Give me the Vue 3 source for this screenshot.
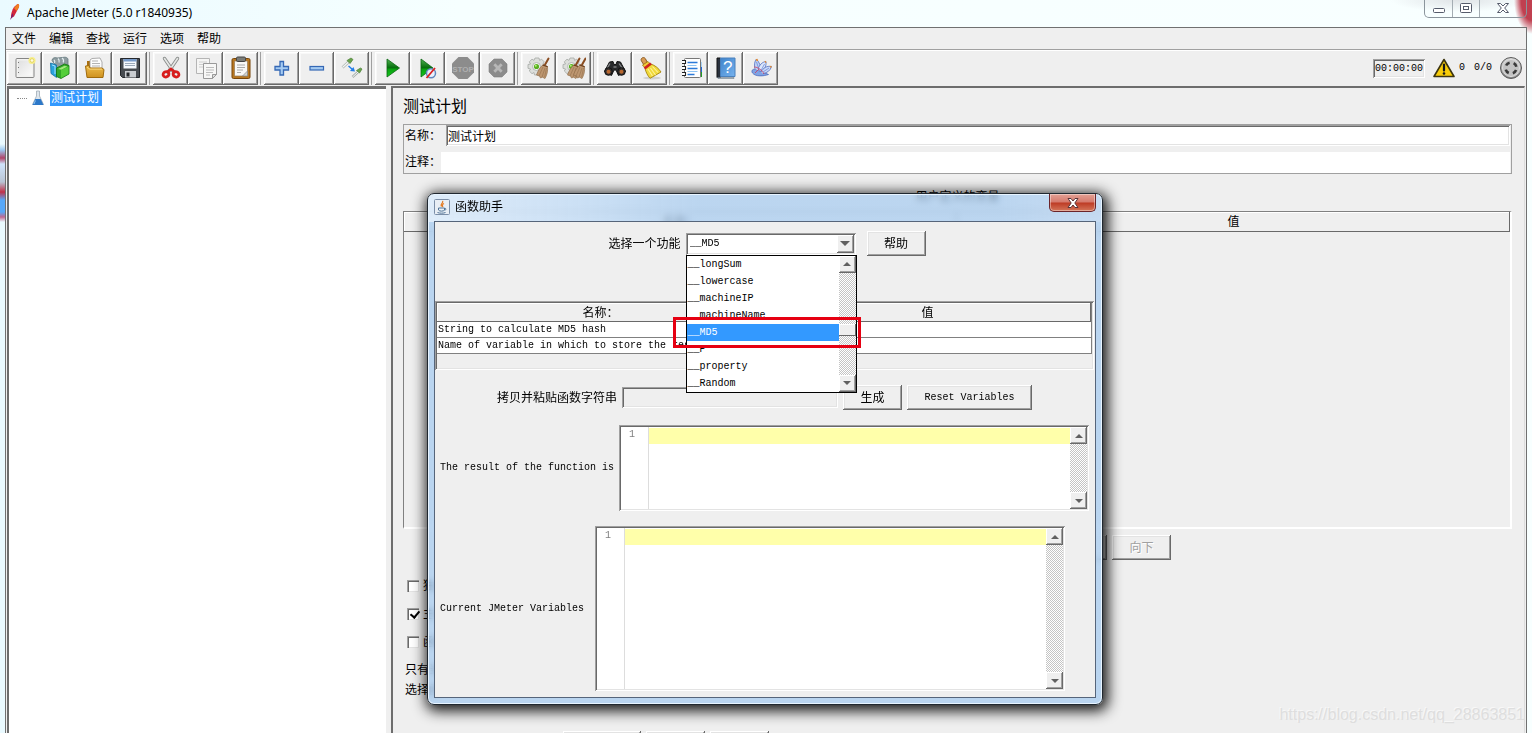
<script setup>
import { ref } from 'vue'

const menus = ['文件', '编辑', '查找', '运行', '选项', '帮助']

const gear =
  '<path d="M8 2h4l.6 2.4 2-1.200 2.600 2.600-1.200 2L18 8.500v4l-2.500.6.9 2.200-2.700 2.600-2-1.200L11 19H7.500L7 16.500l-2 1.200L2.300 15l1.200-2L1 12.300V8.500L3.500 8 2.300 5.800 5 3.200l2 1.200z" fill="#dcdedb" stroke="#a4a8a4" stroke-width=".8"/><circle cx="9.500" cy="10.500" r="4" fill="#f2f4f0" stroke="#b4b8b4"/><circle cx="9.500" cy="10.500" r="2.600" fill="#58b020"/><circle cx="8.800" cy="9.800" r="1" fill="#b6ee7a"/>'
const broom = (x) =>
  `<g transform="translate(${x} 0)"><path d="M20.500 2.500l-4.500 8" stroke="#8a4c20" stroke-width="2" stroke-linecap="round"/><path d="M15.500 8.500c-3 2-5.500 6-7 10.500l3 1 1 2 2-.8 2.500 1.300c2-3.500 3-7.500 2.500-12z" fill="#bd9670" stroke="#94714e" stroke-width=".7"/><path d="M15 11l-4 9M17 12l-3 9M18.500 12l-1.800 9" stroke="#9a7652" stroke-width=".7"/><path d="M14.600 9l5 1.800" stroke="#6b3c1c" stroke-width="1.200"/></g>`

const art = {
  new: '<rect x="3" y="2.500" width="18" height="19" rx="1" fill="#f2f2f1" stroke="#858585"/><path d="M5 4.500h14v15H5z" fill="url(#gPage)"/><path d="M5.500 6v1M5.500 11v1M5.500 16v1" stroke="#777"/><circle cx="19" cy="4.500" r="3.600" fill="#f7ee8c"/><circle cx="19" cy="4.500" r="1.800" fill="#fffbe0" stroke="#d9c94e" stroke-width=".7"/>',
  templates:
    '<path d="M4 4.500C4 2 7 1 9 2l8-.8c2 0 3.500 1.500 3 3V14l-8 2z" fill="#8e9ca0" stroke="#65787f" stroke-width=".8"/><path d="M6 4c1 1 1 2 .5 3M10 2.500c1.500 1.500 1.500 3 1 4M14 2c1.500 1 1.800 3 1.200 4.500" stroke="#e3edf0" fill="none" stroke-width="1.200"/><path d="M2.500 7l6 2v12.500L3 17.500z" fill="#2aa3dc" stroke="#126ea2" stroke-width=".8"/><path d="M4 9l3 1v8" stroke="#a4e1fa" fill="none"/><path d="M8.500 12l8-4 4.500 1.500V18l-8 4.500-4.500-2z" fill="#32a928" stroke="#12750c" stroke-width=".8"/><path d="M10 13l6.500-3.200 3 .8-6 3.200z" fill="#a3e87c"/><path d="M13 14v8l7.500-4.200V10.500z" fill="#54ce3a"/>',
  open: '<path d="M4 9V5h4l2 2v8H4z" fill="#a86f12"/><path d="M7 13V4l2-1.500 8-.5 2 4v9z" fill="#fcfcfc" stroke="#999" stroke-width=".8"/><path d="M9 5h6M9 7.500h8M9 10h8" stroke="#aaa" stroke-width=".9"/><path d="M2.500 10l3.500-.5 1 2.500h12l2 1.500-1 8H4z" fill="url(#gFolder)" stroke="#a06b0d"/><path d="M4 11.500l1 .2 1.300 1.400H19" stroke="#f7d680" fill="none"/>',
  save: '<path d="M2.500 2.500h19v19h-17l-2-2z" fill="#474b50" stroke="#24272b"/><path d="M5.500 3h13v9.500h-13z" fill="#f4f8fd"/><path d="M5.500 3h13v2.500h-13z" fill="#789bc9"/><path d="M7 7.500h10M7 9.500h10" stroke="#9ba9b9"/><path d="M7 15h11v6.500H7z" fill="#c9ccd0"/><path d="M8.500 16.500h3v4h-3z" fill="#25282c"/>',
  cut: '<path d="M5.500 2.500L15 16.500M18.500 2.500L9 16.500" stroke="#8a8d8c" stroke-width="3.400" stroke-linecap="round"/><path d="M5.500 2.500L15 16.500M18.500 2.500L9 16.500" stroke="#e6e8e6" stroke-width="1.600" stroke-linecap="round"/><ellipse cx="7" cy="18.300" rx="3" ry="2.600" fill="none" stroke="#d81c1c" stroke-width="2.800" transform="rotate(-28 7 18.300)"/><ellipse cx="17" cy="18.300" rx="3" ry="2.600" fill="none" stroke="#d81c1c" stroke-width="2.800" transform="rotate(28 17 18.300)"/><path d="M9 15.500l3-2.500 3 2.500" stroke="#d81c1c" stroke-width="2.600" fill="none"/>',
  copy: '<path d="M2.500 2.500h13v15h-13z" fill="#f5f5f4" stroke="#b5b5b5"/><path d="M5 6h8M5 8.500h8M5 11h4" stroke="#cecece"/><path d="M9.500 7.500h13v11l-4 4h-9z" fill="#f7f7f6" stroke="#999"/><path d="M12 11.500h8M12 14h8M12 16.500h7M12 19h4" stroke="#bcbcbc"/><path d="M22.500 18.500h-4v4z" fill="#ddd" stroke="#999"/>',
  paste:
    '<rect x="3" y="2.500" width="18" height="20" rx="1.500" fill="#b87720" stroke="#78460a"/><path d="M5.500 5h13v15h-13z" fill="#f8f8f7" stroke="#967a54" stroke-width=".7"/><rect x="7.500" y="1" width="9" height="4.500" rx="1.200" fill="#7a7c78" stroke="#444"/><path d="M8 9h8M8 11.500h8M8 14h6M8 16.500h4" stroke="#aaa"/><path d="M13.500 20l5-5v5z" fill="#d3d4d0" stroke="#888" stroke-width=".7"/>',
  plus: '<path d="M10 5.500h3.500v5h5V14h-5v5H10v-5H5v-3.500h5z" fill="#a5cbf2" stroke="#3568b5" stroke-width="1.300"/>',
  minus: '<rect x="5" y="10.500" width="13.500" height="3.500" fill="#a5cbf2" stroke="#3568b5" stroke-width="1.200"/>',
  toggle:
    '<path d="M2.500 11.500L8.500 6" stroke="#a7afac" stroke-width="2.600"/><path d="M2.500 11.500L8.500 6" stroke="#f4f8f6" stroke-width="1.300"/><path d="M7 4.500l3 3 3-4-2-1.500z" fill="#69a24c" stroke="#4c8036" stroke-width=".7"/><path d="M12.500 21l5.500-5" stroke="#a7afac" stroke-width="2.400"/><path d="M12.500 21l5.500-5" stroke="#f4f8f6"/><path d="M16.500 14.500l3 2.500 2.500-4-1.500-1z" fill="#69a24c" stroke="#4c8036" stroke-width=".7"/><path d="M8.500 10l4 3.500" stroke="#237de8" stroke-width="1.400"/><path d="M15 15.500l-5-.5 3.500-4z" fill="#237de8"/>',
  start: '<path d="M6 3l12.500 9L6 21z" fill="url(#gPlay)" stroke="#0b6412" stroke-width=".8"/>',
  startNp:
    '<path d="M5 3l12 9-12 9z" fill="url(#gPlay)" stroke="#0b6412" stroke-width=".8"/><circle cx="15" cy="17.300" r="4.500" fill="#e9f1fc" stroke="#5f86be" stroke-width="1.500"/><path d="M10.500 22l8.500-10" stroke="#db2121" stroke-width="1.800"/>',
  stop: '<path d="M7.500 1h9L23 7.500v9L16.500 23h-9L1 16.500v-9z" fill="#8c8c8c"/><text x="12" y="15.500" text-anchor="middle" font-size="8" font-weight="bold" font-family="Liberation Sans, sans-serif" fill="#b0b0b0">STOP</text>',
  shutdown:
    '<path d="M8 3h8l5 5v8l-5 5H8l-5-5V8z" fill="#8c8c8c" stroke="#7d7d7d" stroke-width=".6"/><path d="M8.300 8.300l7.400 7.400M15.700 8.300l-7.400 7.400" stroke="#b7b7b7" stroke-width="2.800"/>',
  clear: gear + broom(1),
  clearAll: gear + broom(-3) + broom(3),
  search:
    '<path d="M6.500 6l3.500-.5 1 3h2l1-3 3.500.5 5 9.500-7 4L13 14h-2l-2.500 5.500-7-4z" fill="#292a2c" stroke="#151515"/><path d="M7 7.500l-3.500 6M16 7.500l3.500 5" stroke="#858789" stroke-width="1.300"/><circle cx="5.500" cy="15.500" r="3.800" fill="#36302e" stroke="#111"/><circle cx="18.500" cy="15.500" r="3.800" fill="#36302e" stroke="#111"/><circle cx="5.500" cy="15.800" r="2" fill="#b9682f"/><circle cx="18.500" cy="15.800" r="2" fill="#b9682f"/><path d="M10.500 11h3" stroke="#aaa"/>',
  resetSearch:
    '<ellipse cx="14" cy="22" rx="9" ry="1.500" fill="#d2d2d0"/><path d="M3.500 2.500c1.200-1.400 3-1.200 4 .3l2 4-3.500 2.300-2.500-4c-.5-1-.6-1.700 0-2.600z" fill="#d99b52" stroke="#80501a" stroke-width=".9"/><path d="M4.500 9L10 5.500l2.500 2.700-5.300 4z" fill="#f1c93a" stroke="#967309" stroke-width=".8"/><path d="M7 12.500l6-4.500c4 1.500 7.500 4 10 8-4 2.500-7 4-11 6.300-2.500-2.800-4-6-5-9.800z" fill="#f0d938" stroke="#a68510" stroke-width=".9"/><path d="M10 13l4.500 7M12.500 12l5 7M14.500 10.500l5.500 6" stroke="#fff19b" stroke-width="1.100"/><path d="M6.500 12.500l6.500-5" stroke="#cf2020" stroke-width="2.800"/>',
  function:
    '<path d="M20 11h3v5h-3z" fill="#2367d8"/><path d="M20 16h3v5h-3z" fill="#229c24"/><path d="M20 6h3v5h-3z" fill="#a9d4f5"/><rect x="5.500" y="2.500" width="16" height="19" rx="1" fill="#fff" stroke="#777"/><path d="M8.500 6.500h10M8.500 12.500h10M8.500 18.500h7" stroke="#2d7ad8" stroke-width="1.500"/><path d="M8.500 9.500h9M8.500 15.500h10" stroke="#8ec4f4"/><path d="M3 4.500h3.500v3H3M3 10.500h3.500v3H3M3 16.500h3.500v3H3" fill="#fff" stroke="#222" stroke-width="1.100"/>',
  help: '<path d="M3 2h3.500v19.500H3z" fill="#28303c" stroke="#111"/><path d="M6.500 2h14.500v18.500H6.500z" fill="url(#gBook)" stroke="#4a80bc"/><path d="M3 21.500h17v1H4z" fill="#ccd4dc" stroke="#567" stroke-width=".5"/><text x="13.800" y="17" text-anchor="middle" font-size="17" font-family="Liberation Sans, sans-serif" fill="#fff">?</text>',
  jmeter:
    '<path d="M3.500 17c-1.500-2 0-4.500 3-3.500 4 1.500 8 2.500 13 5-4.500 1.700-13 2.500-16-1.500z" fill="#7fa2e4" stroke="#3d5fb6" stroke-width=".7"/><path d="M6 13C5 9 5.500 5 7.500 3c3 3.500 4.500 8 5.500 12" fill="#c0d3f7" stroke="#526fc0" stroke-width=".8"/><path d="M9 13c1.500-4 4-7 8-7.500.5 4-1 7-3 10" fill="#dbe6fb" stroke="#526fc0" stroke-width=".8"/><path d="M12 16c2-4 6-6.500 10.500-5.500-1 4-4.500 6.500-8.500 7" fill="#c8d8f8" stroke="#526fc0" stroke-width=".8"/><path d="M7.500 6l3 9M15.500 8l-4 7.500M20 12l-6 4" stroke="#6d89d6" stroke-width=".8"/><path d="M5 11c4 0 8 3 10 7M10 13l-4 4" stroke="#cc4060" stroke-width=".8" fill="none"/><path d="M7.500 3l.9 2M16 6.300l1-.8M21 11l1.500-.5" stroke="#e58a30" stroke-width="1.800"/>'
}

const toolGroups = [
  [['new', '新建'], ['templates', '模板'], ['open', '打开'], ['save', '保存']],
  [['cut', '剪切'], ['copy', '复制'], ['paste', '粘贴']],
  [['plus', '展开'], ['minus', '折叠'], ['toggle', '切换']],
  [['start', '启动'], ['startNp', '不停顿启动'], ['stop', '停止'], ['shutdown', '关闭']],
  [['clear', '清除'], ['clearAll', '清除全部']],
  [['search', '搜索'], ['resetSearch', '重置搜索']],
  [['function', '函数助手'], ['help', '帮助'], ['jmeter', '关于']]
]

const planName = ref('测试计划')
const planComment = ref('')
const options = [
  { label: '独立运行', on: ref(false) },
  { label: '主线程结束', on: ref(true) },
  { label: '函数测试', on: ref(false) }
]

const fns = ['__longSum', '__lowercase', '__machineIP', '__machineName', '__MD5', '__P', '__property', '__Random']
const picked = ref('__MD5')
const params = ['String to calculate MD5 hash', 'Name of variable in which to store the result (optional)']
const generated = ref('')
const result = ref('')
const variables = ref('')
</script>

<template>
  <div class="window">
    <svg class="defs" width="0" height="0" aria-hidden="true">
      <defs>
        <linearGradient id="gPage" x1="0" y1="0" x2="1" y2="1"><stop offset="0" stop-color="#e0e0e0" /><stop offset="1" stop-color="#fafafa" /></linearGradient>
        <linearGradient id="gFolder" x1="0" y1="0" x2="0" y2="1"><stop offset="0" stop-color="#eebd4c" /><stop offset="1" stop-color="#cf9220" /></linearGradient>
        <linearGradient id="gPlay" x1="0" y1="0" x2="0" y2="1"><stop offset="0" stop-color="#4fb352" /><stop offset=".5" stop-color="#046c0a" /><stop offset=".55" stop-color="#0aa010" /><stop offset="1" stop-color="#14c81c" /></linearGradient>
        <linearGradient id="gBook" x1="0" y1="0" x2="1" y2="1"><stop offset="0" stop-color="#3f84cc" /><stop offset="1" stop-color="#76b2ee" /></linearGradient>
        <linearGradient id="gSteel" x1="0" y1="0" x2="0" y2="1"><stop offset="0" stop-color="#d8d8d8" /><stop offset="1" stop-color="#868686" /></linearGradient>
      </defs>
    </svg>

    <header class="titlebar">
      <svg class="feather" viewBox="0 0 12 18" aria-hidden="true">
        <path d="M9.500 1c2 0 2 2 1 4L6 13.500 3 15c-.5-3 1-8 3-11z" fill="#d3283c" />
        <path d="M9.500 1c2 0 2 2 1 4L8.500 8 6 5z" fill="#f08020" />
        <path d="M4.500 10L2 17l3.500-4z" fill="#7c1f6c" />
      </svg>
      <h1>Apache JMeter (5.0 r1840935)</h1>
      <div class="winctl">
        <button type="button" aria-label="最小化"><svg width="14" height="14" viewBox="0 0 14 14"><rect x="1.500" y="7.500" width="11" height="4" rx="1" fill="#fff" stroke="#555b6b" /></svg></button>
        <button type="button" aria-label="最大化"><svg width="14" height="14" viewBox="0 0 14 14"><rect x="1.500" y="2.500" width="11" height="9" rx="1" fill="#fff" stroke="#555b6b" /><rect x="4.500" y="5.500" width="5" height="3" fill="#fff" stroke="#555b6b" /></svg></button>
        <button type="button" class="wide" aria-label="关闭"><svg width="14" height="14" viewBox="0 0 14 14"><path d="M1.500 2.500h3L7 5l2.500-2.500h3L8.700 7l3.800 4.500h-3L7 9l-2.500 2.500h-3L5.300 7z" fill="#fff" stroke="#555b6b" /></svg></button>
      </div>
    </header>

    <div class="client">
      <nav class="menubar">
        <button v-for="m in menus" :key="m" type="button">{{ m }}</button>
      </nav>

      <div class="toolbar">
        <div v-for="(g, i) in toolGroups" :key="i" class="group">
          <button v-for="[id, name] in g" :key="id" type="button" class="tool" :aria-label="name">
            <svg width="24" height="24" viewBox="0 0 24 24" fill="none" v-html="art[id]"></svg>
          </button>
        </div>
        <div class="status">
          <input class="clock sunken" type="text" value="00:00:00" readonly aria-label="耗时" />
          <svg class="warn" width="22" height="20" viewBox="0 0 22 20" aria-hidden="true">
            <path d="M11 1.500L21 18.500H1z" fill="#f8cc08" stroke="#3d3510" stroke-width="1.600" stroke-linejoin="round" />
            <path d="M11 6.500v6" stroke="#1a1a1a" stroke-width="2.200" stroke-linecap="round" /><circle cx="11" cy="15.500" r="1.300" fill="#1a1a1a" />
          </svg>
          <span class="errors">0</span>
          <span class="threads">0/0</span>
          <svg width="24" height="24" viewBox="0 0 24 24" aria-hidden="true">
            <circle cx="12" cy="12" r="10.500" fill="url(#gSteel)" stroke="#5a5a5a" />
            <circle cx="12" cy="12" r="8.500" fill="#c2c2c2" stroke="#dedede" />
            <circle cx="12" cy="12" r="5.500" fill="none" stroke="#3a3a3a" stroke-width="2.600" stroke-dasharray="4.400 4.240" stroke-dashoffset="-2.120" />
          </svg>
        </div>
      </div>

      <div class="split">
        <aside class="tree">
          <div class="node">
            <span class="twig"></span>
            <svg width="12" height="16" viewBox="0 0 12 16" aria-hidden="true">
              <path d="M4.500 1h3v5l4 8.500H.5l4-8.500z" fill="#dfe6ec" stroke="#9fabb5" stroke-width=".8" />
              <path d="M3.300 9h5.400l2.800 6H.5z" fill="#2d78c8" /><path d="M3.500 10.500l-1.500 3.500" stroke="#8fc3f2" />
            </svg>
            <span class="picked">测试计划</span>
          </div>
        </aside>

        <main class="plan">
          <h2>测试计划</h2>
          <div class="form">
            <div class="field"><label for="pname">名称：</label><input id="pname" v-model="planName" class="sunken" type="text" /></div>
            <div class="field note"><label for="pnote">注释：</label><input id="pnote" v-model="planComment" type="text" /></div>
          </div>
          <p class="vartitle">用户定义的变量</p>
          <div class="vars">
            <table><thead><tr><th>名称：</th><th>值</th></tr></thead></table>
          </div>
          <div class="actions">
            <button type="button" class="btn">添加</button>
            <button type="button" class="btn" disabled>删除</button>
            <button type="button" class="btn" disabled>向上</button>
            <button type="button" class="btn" disabled>向下</button>
          </div>
          <label v-for="o in options" :key="o.label" class="check"><input v-model="o.on.value" type="checkbox" />{{ o.label }}</label>
          <p class="hint">只有当</p>
          <p class="hint">选择函</p>
          <div class="paths">
            <button type="button" class="btn browse">浏览...</button>
            <button type="button" class="btn">删除</button>
            <button type="button" class="btn">清除</button>
          </div>
        </main>
      </div>
    </div>

    <section class="dialog" role="dialog" aria-labelledby="dlgtitle">
      <header class="dlghead">
        <svg width="16" height="16" viewBox="0 0 16 16" aria-hidden="true">
          <rect x=".5" y=".5" width="15" height="15" rx="1" fill="#e8eef5" stroke="#7b8ea8" />
          <path d="M8.500 2c1.500 2-3 3-1 5.500M10 4.500C8 5.500 8 6 8.800 8" stroke="#e37a22" stroke-width="1.300" fill="none" />
          <path d="M4.500 9h6v2c-1 1.500-5 1.500-6 0zM10.500 9.500c2-.5 2 1.500 0 1.700M3.500 13.500c2 .9 6 .9 8 0" stroke="#4f7397" fill="none" />
        </svg>
        <h2 id="dlgtitle">函数助手</h2>
        <button type="button" class="dlgclose" aria-label="关闭">
          <svg width="14" height="12" viewBox="0 0 14 12"><path d="M2 1.500h3L7 4l2-2.500h3L8.800 6l3.200 4.500H9L7 8l-2 2.500H2L5.200 6z" fill="#fff" stroke="#5a3438" /></svg>
        </button>
      </header>

      <div class="dlgbody">
        <div class="row pick">
          <label for="fn">选择一个功能</label>
          <div class="combo sunken">
            <select id="fn" v-model="picked"><option v-for="f in fns" :key="f">{{ f }}</option></select>
            <span class="knob down"></span>
            <div class="popup">
              <ul role="listbox" aria-label="函数">
                <li v-for="f in fns" :key="f" role="option" :aria-selected="f === picked" :class="{ on: f === picked }" @click="picked = f">{{ f }}</li>
              </ul>
              <div class="bar"><span class="knob up"></span><span class="thumb"></span><span class="knob down"></span></div>
              <div class="mark"></div>
            </div>
          </div>
          <button type="button" class="btn">帮助</button>
        </div>

        <div class="params sunken">
          <table>
            <thead><tr><th>名称：</th><th>值</th></tr></thead>
            <tbody><tr v-for="p in params" :key="p"><td>{{ p }}</td><td></td></tr></tbody>
          </table>
        </div>

        <div class="row gen">
          <label for="gen">拷贝并粘贴函数字符串</label>
          <input id="gen" v-model="generated" class="sunken" type="text" readonly />
          <button type="button" class="btn">生成</button>
          <button type="button" class="btn reset">Reset Variables</button>
        </div>

        <div class="row out">
          <label for="res">The result of the function is</label>
          <div class="editor sunken">
            <span class="gutter">1</span>
            <textarea id="res" v-model="result"></textarea>
            <div class="bar"><span class="knob up"></span><span class="knob down"></span></div>
          </div>
        </div>

        <div class="row out current">
          <label for="cur">Current JMeter Variables</label>
          <div class="editor sunken tall">
            <span class="gutter">1</span>
            <textarea id="cur" v-model="variables"></textarea>
            <div class="bar"><span class="knob up"></span><span class="knob down"></span></div>
          </div>
        </div>
      </div>
    </section>

    <div class="watermark">https://blog.csdn.net/qq_28863851</div>
  </div>
</template>

<style>
body {
  margin: 0;
  overflow: hidden;
}
</style>

<style scoped>
* {
  box-sizing: border-box;
}
.window {
  position: relative;
  display: flex;
  flex-direction: column;
  height: 100vh;
  padding: 0 5px;
  overflow: hidden;
  font: 12px/16px 'Liberation Sans', 'Noto Sans CJK SC', sans-serif;
  color: #000;
  background:
    linear-gradient(to bottom, transparent 144px, #9cc8f0 150px, #b04468 158px, #cfe4fb 164px, #b9c4d4 182px, #c03048 192px, #58a8f8 200px, #58a8f8 212px, #c06890 217px, transparent 222px) 0 0 / 5px 100% no-repeat,
    radial-gradient(ellipse 18px 34px at 100% 0, #c04050 0 60%, transparent) no-repeat,
    radial-gradient(ellipse 70px 12px at 1460px 0, #dfe3e6, transparent) no-repeat,
    linear-gradient(to right, #eafaff, #f6ffff 30%, #f8ffff);
}
.defs {
  position: absolute;
}
h1,
h2,
p,
ul {
  margin: 0;
  padding: 0;
  font-weight: normal;
}
button,
input,
select,
textarea {
  margin: 0;
  padding: 0;
  border: 0;
  border-radius: 0;
  font: inherit;
  color: inherit;
  background: none;
  outline: 0;
  appearance: none;
}
svg {
  display: block;
  flex: none;
}
.sunken {
  box-shadow: inset 1px 1px #a0a0a0, inset -1px -1px #fff, inset 2px 2px #696969, inset -2px -2px #e3e3e3;
}
.btn {
  height: 25px;
  min-width: 59px;
  padding: 0 16px;
  background: #efefef;
  box-shadow: inset -1px -1px #696969, inset 1px 1px #fff, inset -2px -2px #a0a0a0, inset 2px 2px #e3e3e3;
}
.btn:disabled {
  color: #a0a0a0;
  text-shadow: 1px 1px #fff;
}

.titlebar {
  display: flex;
  flex: none;
  height: 27px;
}
.feather {
  width: 12px;
  height: 18px;
  margin: 3px 7px 0 3px;
}
.titlebar h1 {
  font: 12px/25px 'Noto Sans', 'Open Sans', sans-serif;
}
.winctl {
  display: flex;
  height: 18px;
  margin-left: auto;
  border: 1px solid #8b959c;
  border-top: 0;
  border-radius: 0 0 5px 5px;
}
.winctl button {
  display: flex;
  justify-content: center;
  width: 27px;
  padding-top: 1px;
}
.winctl button + button {
  border-left: 1px solid #a4adb3;
}
.winctl .wide {
  width: 47px;
}

.client {
  display: flex;
  flex: 1;
  flex-direction: column;
  min-height: 0;
  background: #efefef;
  border: 1px solid #707070;
  border-bottom: 0;
}
.menubar {
  display: flex;
  flex: none;
  gap: 13px;
  height: 22px;
  padding-left: 6px;
  border-bottom: 1px solid #a0a0a0;
}
.toolbar {
  display: flex;
  flex: none;
  align-items: center;
  height: 36px;
  padding: 1px 3px 2px 1px;
  border-top: 1px solid #fff;
}
.group {
  display: flex;
}
.group + .group {
  margin-left: 2px;
  padding-left: 3px;
  border-left: 1px solid #a0a0a0;
}
.tool {
  display: flex;
  align-items: center;
  justify-content: center;
  width: 35px;
  height: 33px;
  box-shadow: inset -1px -1px #696969, inset 1px 1px #fff, inset -2px -2px #a0a0a0, inset 2px 2px #f8f8f8;
}
.status {
  display: flex;
  align-items: center;
  margin-left: auto;
  font: 10px/16px 'Liberation Mono', monospace;
}
.clock {
  width: 52px;
  height: 19px;
  padding-left: 2px;
}
.warn {
  margin-left: 8px;
}
.errors {
  margin-left: 4px;
}
.threads {
  margin: 0 7px 0 9px;
}

.split {
  display: flex;
  flex: 1;
  min-height: 0;
  padding: 0 1px;
}
.tree {
  flex: none;
  width: 379px;
  background: #fff;
  border: solid #6d6d6d;
  border-width: 3px 0 0 2px;
}
.node {
  display: flex;
  align-items: center;
  height: 18px;
  padding: 0 0 0 8px;
}
.twig {
  width: 10px;
  margin-right: 5px;
  border-top: 1px dotted #888;
}
.picked {
  margin-left: 6px;
  padding: 0 3px 0 1px;
  color: #fff;
  background: #3399ff;
}
.plan {
  flex: 1;
  min-width: 0;
  margin-left: 5px;
  padding: 0 12px 0 10px;
  border: solid #6d6d6d;
  border-width: 2px 1px 0 2px;
  border-right-color: #dcdcdc;
  overflow: hidden;
  white-space: nowrap;
}
.plan h2 {
  padding-top: 2px;
  font-size: 16px;
  line-height: 34px;
}
.form {
  height: 50px;
  padding: 0 1px;
  border: 1px solid #a0a0a0;
}
.field {
  display: flex;
  align-items: center;
  height: 21px;
  line-height: 20px;
}
.field label {
  width: 41px;
}
.field input {
  flex: 1;
  height: 21px;
  padding-left: 2px;
  background: #fff;
}
.field.note {
  height: 22px;
  margin-top: 5px;
}
.note label {
  width: 36px;
}
.vartitle {
  padding: 16px 0 7px;
  line-height: 14px;
  text-align: center;
}
.vars {
  height: 318px;
  border: 2px solid #fff;
  border-top: 1px solid #808080;
  border-left: 1px solid #808080;
}
table {
  width: 100%;
  table-layout: fixed;
  border-collapse: separate;
  border-spacing: 0;
}
th {
  height: 20px;
  padding: 0;
  font-weight: normal;
  box-shadow: inset -1px -1px #696969, inset 1px 1px #fff;
}
.actions {
  display: flex;
  justify-content: center;
  gap: 5px;
  margin: 6px 0 12px;
  padding-left: 176px;
}
.check {
  display: flex;
  align-items: center;
  height: 28px;
  padding-left: 4px;
}
.check input {
  width: 12px;
  height: 12px;
  margin-right: 4px;
  background: #fff;
  box-shadow: inset 1px 1px #a0a0a0, inset 2px 2px #696969, inset -1px -1px #e3e3e3;
}
.check input:checked::before {
  content: '';
  display: block;
  width: 4px;
  height: 7px;
  margin: 1px 0 0 5px;
  border: solid #000;
  border-width: 0 2px 2px 0;
  transform: rotate(40deg);
}
.hint {
  padding-left: 2px;
  line-height: 20px;
}
.check + .hint {
  margin-top: 4px;
}
.paths {
  display: flex;
  align-items: center;
  gap: 5px;
  margin-top: 31px;
  padding-left: 160px;
}
.browse {
  width: 78px;
}

.dialog {
  position: absolute;
  top: 193px;
  left: 427px;
  width: 676px;
  padding: 0 6px 6px;
  border: 1px solid #202830;
  border-radius: 7px;
  background: linear-gradient(to right, rgba(220, 236, 252, 0.85), rgba(170, 205, 240, 0.75) 40%, rgba(170, 205, 240, 0.75) 85%, rgba(190, 215, 242, 0.85)) 0 0 / 100% 28px no-repeat,
    linear-gradient(rgba(168, 204, 240, 0.75), rgba(168, 204, 240, 0.75)) 0 28px no-repeat;
  backdrop-filter: blur(3px);
  box-shadow: inset 0 0 0 1px #e8f4ff, 2px 3px 14px 3px rgba(0, 0, 0, 0.9);
}
.dlghead {
  display: flex;
  height: 27px;
}
.dlghead > svg {
  margin: 5px 5px 0 0;
}
.dlghead h2 {
  font-size: 12px;
  line-height: 26px;
}
.dlgclose {
  display: flex;
  align-items: center;
  justify-content: center;
  width: 47px;
  height: 18px;
  margin-left: auto;
  border: 1px solid #6b2429;
  border-top: 0;
  border-radius: 0 0 5px 5px;
  background: linear-gradient(#e3a195, #d5796c 48%, #bd3a24 52%, #d4765a);
  box-shadow: inset 0 0 0 1px rgba(255, 255, 255, 0.4);
}
.dlgbody {
  display: flex;
  flex-direction: column;
  gap: 15px;
  padding: 9px 0 6px;
  border: 1px solid #56657a;
  background: #efefef;
}
.row {
  display: flex;
  align-items: center;
  justify-content: center;
  gap: 5px;
}
.pick {
  margin-bottom: 30px;
  padding-left: 4px;
}
.combo {
  position: relative;
  display: flex;
  width: 170px;
  height: 22px;
  margin-right: 6px;
  padding: 2px;
  background: #fff;
}
.combo select {
  flex: 1;
  width: 20px;
  padding-left: 2px;
  font: 10px/16px 'Liberation Mono', monospace;
}
.knob {
  display: flex;
  flex: none;
  align-items: center;
  justify-content: center;
  width: 17px;
  height: 17px;
  background: #efefef;
  box-shadow: inset -1px -1px #696969, inset 1px 1px #fff, inset -2px -2px #a0a0a0;
}
.knob::before {
  content: '';
  border: 4px solid transparent;
}
.up::before {
  border-top: 0;
  border-bottom-color: #606060;
}
.down::before {
  border-bottom: 0;
  border-top-color: #606060;
}
.combo > .knob::before {
  border-width: 5px 5px 0;
}
.combo > .knob {
  height: 18px;
}
.bar {
  display: flex;
  flex: none;
  flex-direction: column;
  width: 17px;
  background: repeating-conic-gradient(#fff 0 25%, #c4c4c4 0 50%) 0 0 / 2px 2px;
}
.bar .down {
  margin-top: auto;
}
.popup {
  position: absolute;
  z-index: 2;
  top: 22px;
  left: 0;
  display: flex;
  width: 171px;
  border: 1px solid #000;
  background: #fff;
}
.popup ul {
  flex: 1;
  list-style: none;
  font: 10px/17px 'Liberation Mono', monospace;
}
.popup li {
  height: 17px;
  padding-left: 1px;
}
.popup .on {
  color: #fff;
  background: #3399ff;
}
.thumb {
  height: 12px;
  margin-top: 51px;
  background: #efefef;
  box-shadow: inset -1px -1px #696969, inset 1px 1px #fff;
}
.mark {
  position: absolute;
  top: 61px;
  left: -14px;
  width: 188px;
  height: 31px;
  border: 3px solid #e60012;
}
.params {
  height: 69px;
  padding: 2px;
  margin-right: 1px;
}
.params table {
  border-right: 1px solid #808080;
}
.params td {
  height: 16px;
  padding: 0 0 0 1px;
  overflow: hidden;
  white-space: nowrap;
  font: 10px/15px 'Liberation Mono', monospace;
  background: #fff;
  border-bottom: 1px solid #808080;
}
.params th {
  height: 19px;
  line-height: 18px;
}
.gen input {
  width: 216px;
  height: 21px;
}
.gen {
  padding-right: 1px;
}
.reset {
  width: 125px;
  font: 10px/16px 'Liberation Mono', monospace;
}
.out {
  justify-content: flex-start;
  padding-left: 5px;
  font: 10px/16px 'Liberation Mono', monospace;
}
.current {
  gap: 11px;
}
.editor {
  display: flex;
  width: 470px;
  height: 86px;
  padding: 2px;
  background: #fff;
}
.tall {
  height: 165px;
}
.gutter {
  width: 28px;
  padding-right: 13px;
  text-align: right;
  color: #808080;
  border-right: 1px solid #ddd;
}
.editor textarea {
  flex: 1;
  min-width: 0;
  resize: none;
  background: linear-gradient(#ffffaa, #ffffaa) 0 1px / 100% 16px no-repeat;
}
.watermark {
  position: absolute;
  right: 7px;
  bottom: 9px;
  font: 16px/18px 'Liberation Sans', sans-serif;
  color: #dedede;
  text-shadow: -1px -1px #f8f8f8;
}
</style>
